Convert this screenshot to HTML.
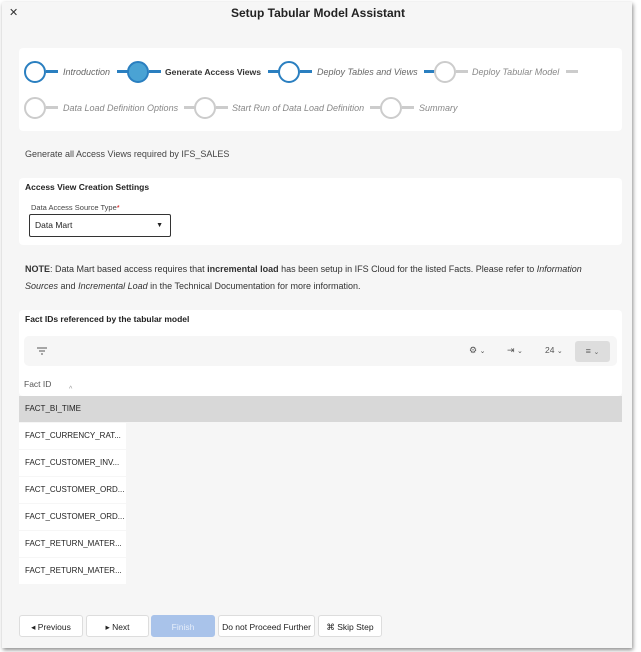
<!DOCTYPE html><html><head><style>
body{margin:0;width:641px;height:652px;background:#fff;font-family:"Liberation Sans",sans-serif;position:relative;overflow:hidden;color:#222}
.dlg{position:absolute;left:2px;top:2px;width:630px;height:646px;background:#f6f6f6;box-shadow:1px 2px 4px rgba(0,0,0,.45)}
.a{position:absolute;white-space:nowrap}
.card{position:absolute;background:#fff;border-radius:4px}
.c{position:absolute;width:18px;height:18px;border-radius:50%;border:2px solid #2a7fc0;background:#fff}
.g{border-color:#ccc}
.ln{position:absolute;height:3px;background:#2a7fc0}
.lg{background:#ccc}
.st{position:absolute;font-size:9px;font-style:italic;color:#666;white-space:nowrap}
.row{position:absolute;left:19px;width:107px;height:26px;background:#fff;font-size:8px;line-height:26px;padding-left:6px;box-sizing:border-box;color:#222}
.btn{position:absolute;top:615px;height:22px;border:1px solid #ddd;border-radius:3px;background:#fff;font-size:8.5px;line-height:22px;text-align:center;box-sizing:border-box}
</style></head><body>
<div class="dlg"></div>
<div class="a" style="left:9px;top:6px;font-size:11px;color:#333">✕</div>
<div class="a" style="left:0;width:636px;text-align:center;top:6px;font-size:12px;font-weight:bold">Setup Tabular Model Assistant</div>
<div class="card" style="left:19px;top:48px;width:603px;height:83px"></div>
<div class="c" style="left:24px;top:61px"></div><div class="ln" style="left:46px;top:70px;width:12px"></div>
<div class="st" style="left:63px;top:67px">Introduction</div>
<div class="ln" style="left:117px;top:70px;width:12px"></div>
<div class="c" style="left:127px;top:61px;background:#4aa3d4"></div><div class="ln" style="left:149px;top:70px;width:12px"></div>
<div class="st" style="left:165px;top:67px;font-style:normal;font-weight:bold;color:#333;font-size:8.6px">Generate Access Views</div>
<div class="ln" style="left:268px;top:70px;width:12px"></div>
<div class="c" style="left:278px;top:61px"></div><div class="ln" style="left:300px;top:70px;width:12px"></div>
<div class="st" style="left:317px;top:67px">Deploy Tables and Views</div>
<div class="ln" style="left:424px;top:70px;width:12px"></div>
<div class="c g" style="left:434px;top:61px"></div><div class="ln lg" style="left:456px;top:70px;width:12px"></div>
<div class="st" style="left:472px;top:67px;color:#888">Deploy Tabular Model</div>
<div class="ln lg" style="left:566px;top:70px;width:12px"></div>
<div class="c g" style="left:24px;top:97px"></div><div class="ln lg" style="left:46px;top:106px;width:12px"></div>
<div class="st" style="left:63px;top:103px;color:#888">Data Load Definition Options</div>
<div class="ln lg" style="left:184px;top:106px;width:12px"></div>
<div class="c g" style="left:194px;top:97px"></div><div class="ln lg" style="left:216px;top:106px;width:12px"></div>
<div class="st" style="left:232px;top:103px;color:#888">Start Run of Data Load Definition</div>
<div class="ln lg" style="left:370px;top:106px;width:12px"></div>
<div class="c g" style="left:380px;top:97px"></div><div class="ln lg" style="left:402px;top:106px;width:12px"></div>
<div class="st" style="left:419px;top:103px;color:#888">Summary</div>
<div class="a" style="left:25px;top:149px;font-size:9px;color:#444">Generate all Access Views required by IFS_SALES</div>
<div class="card" style="left:19px;top:178px;width:603px;height:67px"></div>
<div class="a" style="left:25px;top:182px;font-size:8.5px;font-weight:bold">Access View Creation Settings</div>
<div class="a" style="left:31px;top:203px;font-size:7.5px;color:#444">Data Access Source Type<span style="color:#c00">*</span></div>
<div class="a" style="left:29px;top:214px;width:142px;height:23px;border:1px solid #333;border-radius:2px;box-sizing:border-box;background:#fff;font-size:8.5px;line-height:21px;padding-left:5px">Data Mart<span style="position:absolute;right:7px;font-size:7px">▼</span></div>
<div class="a" style="left:25px;top:261px;font-size:9px;line-height:17px;white-space:normal;width:580px;color:#333"><b>NOTE</b>: Data Mart based access requires that <b>incremental load</b> has been setup in IFS Cloud for the listed Facts. Please refer to <i>Information Sources</i> and <i>Incremental Load</i> in the Technical Documentation for more information.</div>
<div class="card" style="left:19px;top:310px;width:603px;height:86px"></div>
<div class="a" style="left:25px;top:314px;font-size:8.5px;font-weight:bold">Fact IDs referenced by the tabular model</div>
<div class="a" style="left:24px;top:336px;width:593px;height:30px;background:#f6f6f6;border-radius:5px"></div>
<svg class="a" style="left:37px;top:347px" width="10" height="8"><path d="M0 1H10M2 4H8M4 7H6" stroke="#555" stroke-width="1"/></svg>
<div class="a" style="left:469px;top:345px;font-size:9px;color:#555">⚙ <span style="font-size:7px">⌄</span></div>
<div class="a" style="left:507px;top:345px;font-size:9px;color:#555">⇥ <span style="font-size:7px">⌄</span></div>
<div class="a" style="left:545px;top:345px;font-size:8.5px;color:#555">24 <span style="font-size:7px">⌄</span></div>
<div class="a" style="left:575px;top:341px;width:35px;height:21px;background:#ddd;border-radius:3px;font-size:9px;line-height:21px;text-align:center;color:#666">≡ <span style="font-size:7px">⌄</span></div>
<div class="a" style="left:24px;top:379px;font-size:8.5px;color:#555">Fact ID</div>
<div class="a" style="left:69px;top:386px;font-size:7px;color:#999">^</div>
<div class="a" style="left:19px;top:396px;width:603px;height:26px;background:#d8d8d8;font-size:8px;line-height:26px;padding-left:6px;box-sizing:border-box">FACT_BI_TIME</div>
<div class="row" style="top:423px">FACT_CURRENCY_RAT...</div>
<div class="row" style="top:450px">FACT_CUSTOMER_INV...</div>
<div class="row" style="top:477px">FACT_CUSTOMER_ORD...</div>
<div class="row" style="top:504px">FACT_CUSTOMER_ORD...</div>
<div class="row" style="top:531px">FACT_RETURN_MATER...</div>
<div class="row" style="top:558px">FACT_RETURN_MATER...</div>
<div class="btn" style="left:19px;width:64px">◂ Previous</div>
<div class="btn" style="left:86px;width:63px">▸ Next</div>
<div class="btn" style="left:151px;width:64px;background:#a9c3ea;border-color:#a9c3ea;color:#e6eefa">Finish</div>
<div class="btn" style="left:218px;width:97px">Do not Proceed Further</div>
<div class="btn" style="left:318px;width:64px">⌘ Skip Step</div>
</body></html>
